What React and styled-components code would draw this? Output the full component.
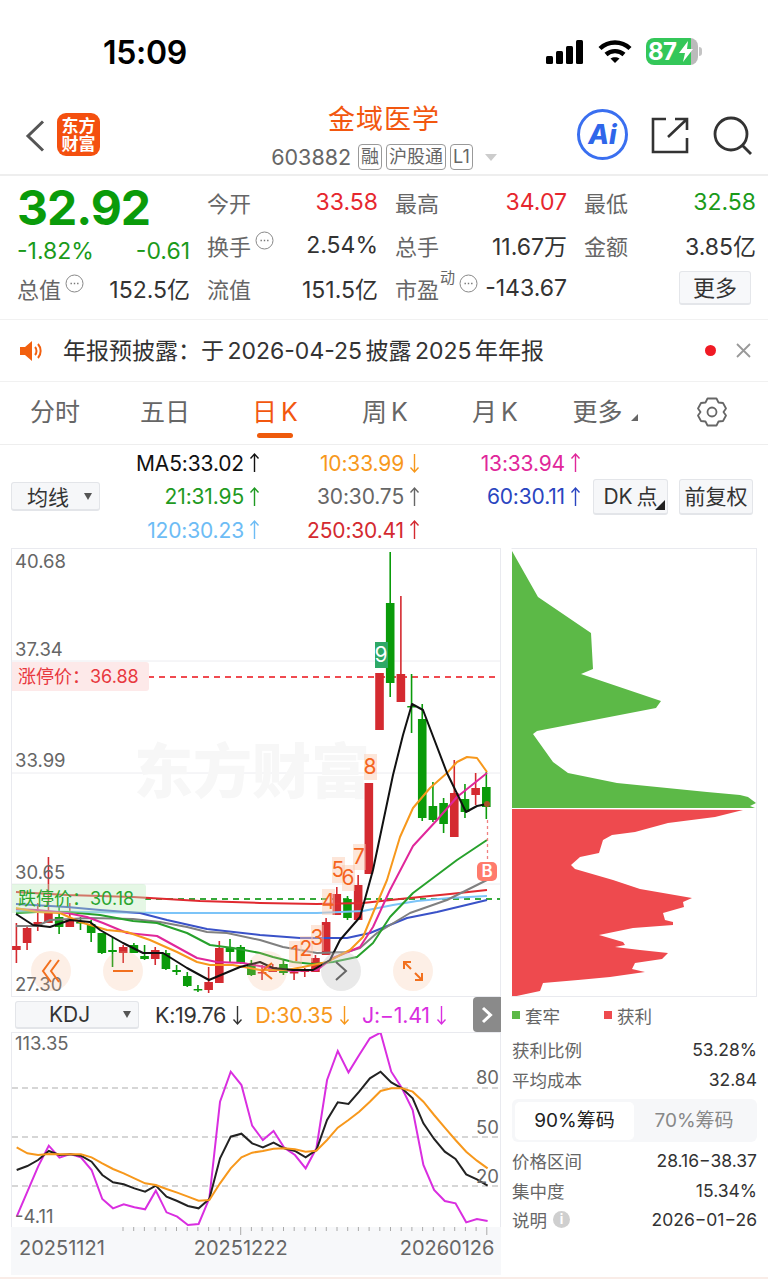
import React from 'react';
import styled, { createGlobalStyle } from 'styled-components';

const RED = '#d42a30';
const GREEN = '#0a9b0a';
const ORANGE = '#f2570f';
const FONT = '"Inter", "Noto Sans CJK SC", sans-serif';

const GlobalStyle = createGlobalStyle`
  html, body { margin: 0; padding: 0; background: #fff; }
  body { font-family: ${FONT}; color: #333; }
`;

const Page = styled.div`
  width: 768px;
  height: 1279px;
  overflow: hidden;
  background: #fff;
  display: flex;
  flex-direction: column;
`;

/* status bar */
const StatusBar = styled.div`
  height: 100px;
  box-sizing: border-box;
  padding: 33px 0 0 103px;
  display: flex;
  align-items: flex-start;
`;
const Clock = styled.div`
  width: 443px;
  font-size: 32px;
  line-height: 40px;
  font-weight: 600;
  color: #000;
  letter-spacing: -0.3px;
`;
const Battery = styled.div`
  position: relative;
  width: 52px;
  height: 27px;
  margin: 5px 0 0 14px;
  border-radius: 8px;
  background: linear-gradient(90deg, #34c759 0 86%, #bbb 86% 100%);
  color: #fff;
  font-size: 24px;
  line-height: 27px;
  font-weight: 700;
  padding-left: 2px;
  box-sizing: border-box;
  letter-spacing: -0.5px;
`;
const BatteryBolt = styled.svg`
  position: absolute;
  right: 5px;
  top: 3px;
`;
const BatteryNub = styled.div`
  position: absolute;
  right: -4px;
  top: 9px;
  width: 3px;
  height: 9px;
  border-radius: 0 3px 3px 0;
  background: #c4c4c4;
`;
const StatusIcon = styled.svg`
  margin: ${(p) => p.$top || 7}px 0 0 ${(p) => p.$left || 0}px;
`;

/* nav */
const Nav = styled.div`
  height: 76px;
  box-sizing: border-box;
  border-bottom: 2px solid #eeeeee;
  display: grid;
  grid-template-columns: 1fr auto 1fr;
`;
const NavLeft = styled.div`
  display: flex;
  align-items: flex-start;
  padding: 13px 0 0 25px;
`;
const BackIcon = styled.svg`
  margin-top: 7px;
`;
const Logo = styled.div`
  width: 43px;
  height: 43px;
  margin-left: 12px;
  border-radius: 9px;
  background: #f4500f;
  color: #fff;
  font-size: 17px;
  line-height: 18px;
  font-weight: 700;
  text-align: center;
  display: flex;
  align-items: center;
  justify-content: center;
`;
const NavCenter = styled.div`
  display: flex;
  flex-direction: column;
  align-items: center;
`;
const Title = styled.div`
  height: 40px;
  line-height: 40px;
  font-size: 27px;
  color: ${ORANGE};
  letter-spacing: 1px;
`;
const SubRow = styled.div`
  margin-top: 5px;
  display: flex;
  align-items: center;
  gap: 4px;
  height: 24px;
`;
const Code = styled.span`
  font-size: 21.5px;
  color: #666;
  margin-right: 3px;
`;
const Tag = styled.span`
  border: 1px solid #999;
  border-radius: 4px;
  font-size: 18px;
  line-height: 24px;
  height: 24px;
  padding: 0 2px;
  color: #666;
`;
const Caret = styled.span`
  width: 0;
  height: 0;
  margin-left: 8px;
  border-left: 6px solid transparent;
  border-right: 6px solid transparent;
  border-top: 7px solid #ccc;
`;
const NavRight = styled.div`
  position: relative;
  display: flex;
  justify-content: flex-end;
  align-items: flex-start;
  padding: 9px 16px 0 0;
`;
const AiBadge = styled.div`
  position: relative;
  width: 51px;
  height: 51px;
  box-sizing: border-box;
  border: 3px solid #3a6ff0;
  border-radius: 50%;
  color: #2f66ea;
  font-size: 27px;
  line-height: 45px;
  font-weight: 800;
  font-style: italic;
  text-align: center;
  margin-right: 23px;
`;
const ShareIcon = styled.svg`
  margin: 8px 24px 0 0;
`;
const SearchIcon = styled.svg`
  margin-top: 7px;
`;

/* quote */
const Quote = styled.div`
  height: 144px;
  box-sizing: border-box;
  border-bottom: 1px solid #f1f1f1;
  padding: 4px 0 0 17px;
  display: grid;
  grid-template-columns: 173px 171px 172px 172px;
  column-gap: 17px;
  grid-auto-rows: 43px;
  font-size: 22px;
`;
const Price = styled.div`
  margin-top: 3px;
  font-size: 48px;
  line-height: 50px;
  font-weight: 700;
  letter-spacing: -1px;
  color: ${GREEN};
`;
const Stat = styled.div`
  display: flex;
  justify-content: space-between;
  align-items: center;
  padding-top: ${(p) => p.$shift || 0}px;
`;
const Label = styled.span`
  display: flex;
  align-items: flex-start;
  color: #666;
`;
const Value = styled.span`
  font-size: 23px;
  color: ${(p) => p.$color || '#333'};
`;
const DotsIcon = styled.svg`
  margin: 2px 0 0 4px;
`;
const Sup = styled.sup`
  font-size: 15px;
  line-height: 16px;
  margin: -2px 0 0 1px;
  vertical-align: baseline;
`;
const MoreButton = styled.div`
  margin: 0 5px 0 auto;
  width: 72px;
  height: 34px;
  line-height: 33px;
  text-align: center;
  box-sizing: border-box;
  border: 1px solid #e4e6ea;
  border-bottom-width: 2px;
  border-radius: 3px;
  background: #f7f8fa;
  color: #333;
  align-self: center;
`;

/* notice */
const Notice = styled.div`
  height: 62px;
  box-sizing: border-box;
  border-bottom: 1px solid #f1f1f1;
  padding: 0 17px 0 20px;
  display: flex;
  align-items: center;
  font-size: 23px;
  color: #333;
`;
const NoticeText = styled.span`
  margin: 0 0 4px 19px;
  flex: 1;
  word-spacing: -3px;
`;
const RedDot = styled.span`
  width: 11px;
  height: 11px;
  border-radius: 50%;
  background: #f01a24;
  margin-right: 20px;
`;

/* tabs */
const Tabs = styled.div`
  height: 63px;
  box-sizing: border-box;
  border-bottom: 1px solid #eeeeee;
  display: grid;
  grid-template-columns: repeat(7, 110px);
`;
const Tab = styled.div`
  position: relative;
  text-align: center;
  line-height: 60px;
  font-size: 25px;
  word-spacing: -3px;
  color: ${(p) => (p.$active ? ORANGE : '#666')};
`;
const TabBar = styled.span`
  position: absolute;
  left: 37px;
  top: 51px;
  width: 36px;
  height: 5px;
  border-radius: 3px;
  background: #ee5a0c;
`;
const TabCorner = styled.span`
  display: inline-block;
  width: 0;
  height: 0;
  margin-left: 8px;
  border-left: 7px solid transparent;
  border-bottom: 7px solid #666;
`;
const GearWrap = styled.div`
  display: flex;
  align-items: center;
  justify-content: center;
  padding-right: 6px;
  padding-bottom: 2px;
`;

/* moving average block */
const MaSection = styled.div`
  height: 103px;
  box-sizing: border-box;
  padding-left: 11px;
  display: flex;
  align-items: center;
`;
const SelectBox = styled.div`
  box-sizing: border-box;
  width: ${(p) => p.$width}px;
  height: ${(p) => p.$height}px;
  background: #f6f7f9;
  border: 1px solid #e3e5e9;
  border-bottom-width: 2px;
  border-radius: 3px;
  display: flex;
  align-items: center;
  justify-content: space-between;
  padding: 0 7px 0 ${(p) => p.$pad}px;
  font-size: 21px;
  color: #333;
`;
const SelectCaret = styled.span`
  width: 0;
  height: 0;
  border-left: 4.5px solid transparent;
  border-right: 4.5px solid transparent;
  border-top: 7px solid #555;
`;
const MaGrid = styled.div`
  width: 481px;
  display: grid;
  grid-template-columns: 160px 160px 161px;
  grid-auto-rows: 33.5px;
`;
const MaItem = styled.div`
  display: flex;
  justify-content: flex-end;
  align-items: center;
  gap: 5px;
  font-size: 21px;
  letter-spacing: -0.15px;
  color: ${(p) => p.$color};
`;
const ToolButton = styled.div`
  position: relative;
  box-sizing: border-box;
  width: ${(p) => p.$width}px;
  height: 36px;
  margin-left: ${(p) => p.$gap}px;
  background: #f6f7f9;
  border: 1px solid #e3e5e9;
  border-bottom-width: 2px;
  border-radius: 3px;
  font-size: 21px;
  line-height: 33px;
  text-align: center;
  word-spacing: -2px;
  color: #333;
`;
const ToolCorner = styled.span`
  position: absolute;
  right: 2px;
  bottom: 3px;
  width: 0;
  height: 0;
  border-left: 10px solid transparent;
  border-bottom: 10px solid #222;
`;

/* charts */
const ChartGrid = styled.div`
  height: 729px;
  padding-left: 11px;
  display: grid;
  grid-template-columns: 490px 246px;
  column-gap: 10px;
`;
const LeftColumn = styled.div`
  display: flex;
  flex-direction: column;
`;
const RightColumn = styled.div`
  display: flex;
  flex-direction: column;
`;
const KBox = styled.div`
  position: relative;
  width: 490px;
  height: 449px;
  box-sizing: border-box;
  border: 1px solid #e9eaef;
  overflow: hidden;
`;
const Canvas = styled.svg`
  display: block;
`;
const PriceTick = styled.span`
  position: absolute;
  left: 3px;
  top: ${(p) => p.$y - 549 - 12}px;
  font-size: 18.5px;
  line-height: 24px;
  color: #666;
`;
const LimitTag = styled.div`
  position: absolute;
  left: 0;
  top: ${(p) => p.$y - 549}px;
  width: ${(p) => p.$width}px;
  height: 29px;
  line-height: 29px;
  padding-left: 6px;
  box-sizing: border-box;
  border-radius: 0 3px 3px 0;
  font-size: 18px;
  white-space: nowrap;
  color: ${(p) => p.$color};
  background: ${(p) => p.$bg};
`;
const Watermark = styled.div`
  position: absolute;
  left: 122px;
  top: 184px;
  font-size: 59px;
  line-height: 70px;
  font-family: "Noto Sans CJK SC", serif;
  font-weight: 900;
  color: #f7f7f7;
  white-space: nowrap;
`;
const NineMark = styled.span`
  position: absolute;
  left: ${(p) => p.$x - 12 - 6.5}px;
  top: ${(p) => p.$y - 549 - 13}px;
  width: 13px;
  height: 26px;
  line-height: 26px;
  text-align: center;
  font-size: 21px;
  color: ${(p) => (p.$nine ? '#fff' : '#f5641e')};
  background: ${(p) => (p.$nine ? '#2ea866' : 'rgba(250, 200, 170, 0.45)')};
`;
const RoundButton = styled.div`
  position: absolute;
  left: ${(p) => p.$x - 12 - 20}px;
  top: ${(p) => 971 - 549 - 20}px;
  width: 40px;
  height: 40px;
  border-radius: 50%;
  background: ${(p) => (p.$gray ? 'rgba(200, 200, 200, 0.4)' : 'rgba(246, 180, 140, 0.22)')};
  display: flex;
  align-items: center;
  justify-content: center;
`;
const BuyBadge = styled.div`
  position: absolute;
  left: ${487 - 12 - 10}px;
  top: ${871 - 549 - 9}px;
  width: 20px;
  height: 19px;
  border-radius: 5px;
  background: #ff7b6c;
  color: #fff;
  font-size: 17px;
  line-height: 19px;
  font-weight: 600;
  text-align: center;
`;

const KdjHeader = styled.div`
  position: relative;
  height: 35px;
  padding-left: 4px;
  display: flex;
  align-items: center;
  font-size: 21.5px;
`;
const KdjValue = styled.div`
  display: flex;
  align-items: center;
  gap: 6px;
  margin-left: ${(p) => p.$gap}px;
  color: ${(p) => p.$color};
  letter-spacing: -0.3px;
`;
const SideButton = styled.div`
  position: absolute;
  right: 0;
  top: 0;
  width: 28px;
  height: 35px;
  border-radius: 4px 0 0 4px;
  background: #8a8a8a;
  display: flex;
  align-items: center;
  justify-content: center;
`;
const KdjBox = styled.div`
  position: relative;
  width: 490px;
  height: 195px;
  box-sizing: border-box;
  border-left: 1px solid #e9eaef;
  border-right: 1px solid #e9eaef;
  border-top: 1px solid #e9eaef;
`;
const KdjTick = styled.span`
  position: absolute;
  left: ${(p) => (p.$right ? 'auto' : '3px')};
  right: ${(p) => (p.$right ? '1px' : 'auto')};
  top: ${(p) => p.$y - 1033 - 12}px;
  font-size: 18.5px;
  line-height: 24px;
  color: #666;
`;
const DateBar = styled.div`
  width: 490px;
  height: 48px;
  position: relative;
  background: #f7f8fa;
  display: flex;
  box-sizing: border-box;
  padding: 8px 0 0 8px;
  font-size: 20px;
  line-height: 26px;
  color: #666;
`;
const DateLabel = styled.span`
  margin-left: ${(p) => p.$gap || 0}px;
`;
const TickMarks = styled.svg`
  position: absolute;
  left: 0;
  top: 0;
`;
const PageFoot = styled.div`
  height: 2px;
  background: #f9ece7;
`;

const ChipBox = styled.div`
  width: 246px;
  height: 449px;
  box-sizing: border-box;
  border: 1px solid #e9eaef;
  border-left-color: #fff;
`;
const Legend = styled.div`
  height: 38px;
  box-sizing: border-box;
  padding: 0 0 2px 1px;
  display: flex;
  align-items: center;
  font-size: 17.5px;
  color: #666;
`;
const LegendItem = styled.div`
  display: flex;
  align-items: center;
  width: 92px;
`;
const LegendSwatch = styled.span`
  width: 8px;
  height: 8px;
  margin-right: 5px;
  background: ${(p) => p.$color};
`;
const InfoRow = styled.div`
  height: 29.5px;
  display: flex;
  align-items: center;
  justify-content: space-between;
  font-size: 17.5px;
  padding-left: 1px;
`;
const InfoLabel = styled.span`
  display: flex;
  align-items: center;
  gap: 6px;
  color: #666;
`;
const InfoValue = styled.span`
  color: #333;
`;
const InfoMark = styled.span`
  width: 17px;
  height: 17px;
  border-radius: 50%;
  background: #cfcfcf;
  color: #fff;
  font-size: 13px;
  line-height: 17px;
  font-weight: 700;
  text-align: center;
`;
const Segment = styled.div`
  margin: 5px 0 4px 1px;
  height: 43px;
  box-sizing: border-box;
  padding: 3px;
  border-radius: 6px;
  background: #f6f7f9;
  display: grid;
  grid-template-columns: 119px 1fr;
`;
const SegmentItem = styled.div`
  border-radius: 5px;
  text-align: center;
  line-height: 38px;
  font-size: 19px;
  color: ${(p) => (p.$active ? '#222' : '#888')};
  background: ${(p) => (p.$active ? '#fff' : 'transparent')};
`;

/* drawings */
const Arrow = ({ down }) => (
  <svg width="11" height="22" viewBox="0 0 11 22" fill="none" stroke="currentColor" strokeWidth="1.4">
    {down ? (
      <path d="M5.5 2V20M1.5 15.5L5.5 20L9.5 15.5" />
    ) : (
      <path d="M5.5 2V20M1.5 6.5L5.5 2L9.5 6.5" />
    )}
  </svg>
);

const Dots = () => (
  <DotsIcon width="19" height="19" viewBox="0 0 19 19" fill="none">
    <circle cx="9.5" cy="9.5" r="8.5" stroke="#888" strokeWidth="1" />
    <path d="M5.5 9.5h1.4M8.8 9.5h1.4M12.1 9.5h1.4" stroke="#777" strokeWidth="1.5" />
  </DotsIcon>
);

// candles: color, wick top, wick bottom, body top, body bottom (page coords)
const candleRows = [
  ['r', 923, 963, 946, 950], ['r', 927, 950, 928, 943], ['r', 903, 931, 922, 926], ['r', 857, 923, 913, 923],
  ['g', 907, 934, 917, 927], ['r', 903, 927, 920, 927], ['g', 917, 930, 922, 923], ['g', 920, 942, 924, 933],
  ['g', 933, 954, 933, 953], ['g', 937, 967, 950, 952], ['r', 945, 963, 947, 953], ['g', 943, 953, 945, 953],
  ['g', 945, 960, 956, 959], ['r', 947, 965, 950, 959], ['g', 950, 970, 953, 969], ['g', 965, 975, 970, 972],
  ['g', 972, 987, 976, 986], ['g', 985, 992, 989, 990], ['r', 967, 993, 982, 990], ['r', 941, 983, 948, 983],
  ['g', 939, 962, 948, 952], ['g', 945, 964, 947, 963], ['g', 960, 976, 963, 975], ['r', 965, 980, 972, 973],
  ['r', 964, 972, 967, 972], ['g', 960, 975, 964, 973], ['r', 971, 980, 972, 973], ['r', 968, 977, 970, 972],
  ['r', 955, 972, 958, 972], ['r', 918, 955, 922, 955], ['r', 887, 915, 894, 915], ['g', 896, 920, 899, 918],
  ['r', 875, 920, 885, 920], ['r', 783, 874, 783, 874], ['r', 673, 730, 673, 730], ['g', 552, 697, 603, 683],
  ['r', 596, 702, 674, 702], ['g', 674, 733, 706, 707.5], ['g', 704, 821, 719, 818], ['g', 782, 822, 806, 820],
  ['g', 798, 833, 803, 824], ['r', 760, 837, 793, 837], ['g', 784, 818, 799, 812], ['r', 773, 805, 788, 795],
  ['g', 772, 819, 787, 807],
];

const maLines = [
  ['#e02a30', '16,892 67,895 133,897 200,901 260,903 317,904 363,903 400,899 450,894 487,890'],
  ['#7cc4f8', '16,911 83,912 167,913 260,913 317,913 363,911 393,905 417,901 450,898 487,896'],
  ['#3a52c8', '16,904 67,907 100,910 140,913 167,920 207,929 260,935 300,938 347,938 370,933 407,918 437,912 487,900'],
  ['#808080', '16,926 37,926 50,920 90,918 133,919 160,922 187,927 207,932 227,933 260,940 283,947 317,953 347,952 360,948 377,933 410,913 447,900 487,880'],
  ['#27a12c', '16,913 37,912 67,912 100,915 133,921 157,923 187,933 210,945 233,948 260,953 273,957 293,962 313,964 333,962 357,957 373,943 390,917 413,893 437,875 457,860 487,840'],
  ['#e0279a', '16,909 37,910 67,913 87,917 103,923 127,933 157,936 177,947 197,958 217,962 243,963 270,968 292,971 317,970 333,958 360,947 373,927 390,890 413,846 437,820 457,797 487,773'],
  ['#f7981c', '16,908 37,912 60,913 80,922 107,930 127,932 150,940 177,952 197,962 210,965 233,965 260,970 287,970 303,967 327,962 350,950 363,937 373,913 387,880 400,837 413,808 430,788 447,773 457,762 467,757 477,758 487,772'],
  ['#111111', '16,914 33,925 50,927 70,920 90,922 100,930 123,943 143,953 163,953 187,968 209,980 240,967 260,962 273,968 293,970 313,970 330,960 340,940 360,917 373,870 393,775 403,735 412,704 423,710 447,773 466,812 477,806 487,804'],
];

const kY = [525,513,495,468,480,478,482,500,540,562,568,580,590,572,605,618,633,640,612,490,425,416,445,457,443,460,468,487,465,375,322,327,290,250,230,262,280,310,385,432,470,492,538,553,572];
const dY = [457,475,480,477,478,478,478,487,505,522,535,550,565,570,582,593,605,617,615,565,520,487,473,468,461,460,463,470,467,435,398,375,350,320,288,280,280,290,320,360,398,435,470,497,520];
const jY = [665,590,515,452,488,477,487,525,612,640,628,637,643,587,652,665,690,687,610,320,230,270,392,435,408,458,480,520,460,255,168,232,180,130,113,230,280,345,510,585,618,625,682,672,678];
const kdjPoints = (ys) => ys.map((y, i) => `${(50 + 32.11 * i) / 3},${995 + y / 3}`).join(' ');

const greenChips = '512,551 538,597 591,633 593,669 581,674 661,701 656,708 537,731 533,734 553,762 568,773 617,783 707,792 740,795 748,797 756,803 750,806 755,808 512,808';
const redChips = '512,809 743,810 715,817 668,823 635,832 612,835 603,840 599,853 580,857 571,865 575,869 613,880 640,889 692,898 683,902 684,907 663,913 665,920 673,922 673,925 633,928 599,935 623,942 625,945 615,947 640,950 668,953 662,959 635,963 632,969 645,972 610,977 578,980 543,983 540,991 512,997';

const Candle = ({ row, i }) => {
  const [c, top, bottom, bodyTop, bodyBottom] = row;
  const x = 16.4 + 10.68 * i;
  const fill = c === 'r' ? RED : GREEN;
  const h = bodyBottom - bodyTop;
  return (
    <g>
      <line x1={x} x2={x} y1={top} y2={bottom} stroke={fill} strokeWidth="1.6" />
      <rect x={x - 4.3} y={bodyTop} width="8.6" height={Math.max(h, 1.5)} fill={fill} />
    </g>
  );
};

const CandleChart = () => (
  <Canvas width="488" height="447" viewBox="12 549 488 447">
    {[661, 773, 884].map((y) => (
      <line key={y} x1="12" x2="500" y1={y} y2={y} stroke="#ececf0" strokeWidth="1" />
    ))}
    <line x1="148" x2="500" y1="677" y2="677" stroke="#f04a50" strokeWidth="2" strokeDasharray="6 5" />
    <line x1="145" x2="500" y1="899" y2="899" stroke="#35a93a" strokeWidth="2" strokeDasharray="6 5" />
    {candleRows.map((row, i) => <Candle key={i} row={row} i={i} />)}
    {maLines.map(([color, pts]) => (
      <polyline key={color} points={pts} fill="none" stroke={color} strokeWidth="2" strokeLinejoin="round" />
    ))}
    <line x1="487.5" x2="487.5" y1="820" y2="862" stroke="#f08080" strokeWidth="1.3" strokeDasharray="3 3" />
    <circle cx="487" cy="804" r="3" fill="#a9552a" />
  </Canvas>
);

const KdjChart = () => (
  <Canvas width="488" height="194" viewBox="12 1033 488 194">
    {[1088, 1137, 1186].map((y) => (
      <line key={y} x1="12" x2="500" y1={y} y2={y} stroke="#c9c9c9" strokeWidth="1.3" strokeDasharray="6 4" />
    ))}
    <polyline points={kdjPoints(jY)} fill="none" stroke="#d92ee0" strokeWidth="2" />
    <polyline points={kdjPoints(kY)} fill="none" stroke="#222" strokeWidth="2" />
    <polyline points={kdjPoints(dY)} fill="none" stroke="#f7981c" strokeWidth="2" />
  </Canvas>
);

const ChipChart = () => (
  <Canvas width="244" height="447" viewBox="512 549 244 447">
    <polygon points={greenChips} fill="#5cb947" />
    <polygon points={redChips} fill="#ee4a4e" />
  </Canvas>
);

const ticks = Array.from({ length: 35 }, (_, i) => 123 + 10.7 * i);

const maItems = [
  ['MA5:33.02', '#111', false], ['10:33.99', '#f7981c', true], ['13:33.94', '#e0279a', false],
  ['21:31.95', '#1f9a22', false], ['30:30.75', '#666', false], ['60:30.11', '#2a45c0', false],
  ['120:30.23', '#6dbcf5', false], ['250:30.41', '#d42a30', false],
];

const tdMarks = [
  ['1', 295, 954], ['2', 306, 949], ['3', 317, 938], ['4', 328, 902], ['5', 338, 870],
  ['6', 348, 878], ['7', 359, 857], ['8', 370, 767],
];

const orangeStroke = { fill: 'none', stroke: '#f2701e', strokeWidth: 2 };

const App = () => (
  <Page>
    <GlobalStyle />
    <StatusBar>
      <Clock>15:09</Clock>
      <StatusIcon width="38" height="24" viewBox="0 0 38 24" fill="#000">
        <rect x="0" y="16" width="7" height="8" rx="1.5" />
        <rect x="10" y="11" width="7" height="13" rx="1.5" />
        <rect x="20" y="6" width="7" height="18" rx="1.5" />
        <rect x="30" y="0" width="7" height="24" rx="1.5" />
      </StatusIcon>
      <StatusIcon $left={14} width="34" height="24" viewBox="0 0 34 24" fill="none" stroke="#000" strokeWidth="4.4">
        <path d="M2 8.5C10.5 0.5 23.5 0.5 32 8.5" />
        <path d="M8 14.5C13 10 21 10 26 14.5" />
        <path d="M17 23L12.5 18.6C15 16.8 19 16.8 21.5 18.6Z" fill="#000" stroke="none" />
      </StatusIcon>
      <Battery>
        87
        <BatteryBolt width="14" height="21" viewBox="0 0 14 21" fill="#fff">
          <path d="M9 0L0 12H6L4 21L14 8H8Z" />
        </BatteryBolt>
        <BatteryNub />
      </Battery>
    </StatusBar>

    <Nav>
      <NavLeft>
        <BackIcon width="20" height="32" viewBox="0 0 20 32" fill="none" stroke="#555" strokeWidth="3">
          <path d="M18 1.5L3 16L18 30.5" />
        </BackIcon>
        <Logo>东方<br />财富</Logo>
      </NavLeft>
      <NavCenter>
        <Title>金域医学</Title>
        <SubRow>
          <Code>603882</Code>
          <Tag>融</Tag>
          <Tag>沪股通</Tag>
          <Tag>L1</Tag>
          <Caret />
        </SubRow>
      </NavCenter>
      <NavRight>
        <AiBadge>Ai</AiBadge>
        <ShareIcon width="38" height="37" viewBox="0 0 38 37" fill="none" stroke="#333" strokeWidth="2.6">
          <path d="M15 2H2V35H36V21" />
          <path d="M17 20L36 2M24 2H36V13" />
        </ShareIcon>
        <SearchIcon width="39" height="39" viewBox="0 0 39 39" fill="none" stroke="#333" strokeWidth="2.8">
          <circle cx="18" cy="18" r="16" />
          <path d="M29 29L38 38" />
        </SearchIcon>
      </NavRight>
    </Nav>

    <Quote>
      <Price>32.92</Price>
      <Stat><Label>今开</Label><Value $color="#e6272e">33.58</Value></Stat>
      <Stat><Label>最高</Label><Value $color="#e6272e">34.07</Value></Stat>
      <Stat><Label>最低</Label><Value $color="#1a9a1a">32.58</Value></Stat>

      <Stat $shift={13}><Value $color="#1a9a1a">-1.82%</Value><Value $color="#1a9a1a">-0.61</Value></Stat>
      <Stat><Label>换手<Dots /></Label><Value>2.54%</Value></Stat>
      <Stat><Label>总手</Label><Value>11.67万</Value></Stat>
      <Stat><Label>金额</Label><Value>3.85亿</Value></Stat>

      <Stat><Label>总值<Dots /></Label><Value>152.5亿</Value></Stat>
      <Stat><Label>流值</Label><Value>151.5亿</Value></Stat>
      <Stat><Label>市盈<Sup>动</Sup><Dots /></Label><Value>-143.67</Value></Stat>
      <Stat><MoreButton>更多</MoreButton></Stat>
    </Quote>

    <Notice>
      <svg width="24" height="22" viewBox="0 0 24 22" fill="#f2600f">
        <path d="M0 7H5L12 1V21L5 15H0Z" />
        <path d="M15 7C17 9 17 13 15 15M18 4C21.500 8 21.500 14 18 18" fill="none" stroke="#f2600f" strokeWidth="2" />
      </svg>
      <NoticeText>年报预披露：于 2026-04-25 披露 2025 年年报</NoticeText>
      <RedDot />
      <svg width="15" height="15" viewBox="0 0 15 15" fill="none" stroke="#999" strokeWidth="1.8">
        <path d="M1 1L14 14M14 1L1 14" />
      </svg>
    </Notice>

    <Tabs>
      <Tab>分时</Tab>
      <Tab>五日</Tab>
      <Tab $active>日 K<TabBar /></Tab>
      <Tab>周 K</Tab>
      <Tab>月 K</Tab>
      <Tab>更多<TabCorner /></Tab>
      <GearWrap>
        <svg width="30" height="32" viewBox="0 0 30 32" fill="none" stroke="#666" strokeWidth="1.8">
          <path d="M10.500 2.500H19.500L21.500 6.500L26 7L29 12.500L26.500 16L29 19.500L26 25L21.500 25.500L19.500 29.500H10.500L8.500 25.500L4 25L1 19.500L3.500 16L1 12.500L4 7L8.500 6.500Z" strokeLinejoin="round" />
          <circle cx="15" cy="16" r="4.5" />
        </svg>
      </GearWrap>
    </Tabs>

    <MaSection>
      <SelectBox $width={89} $height={29} $pad={15}>均线<SelectCaret /></SelectBox>
      <MaGrid>
        {maItems.map(([text, color, down]) => (
          <MaItem key={text} $color={color}>{text}<Arrow down={down} /></MaItem>
        ))}
      </MaGrid>
      <ToolButton $width={75} $gap={12}>DK 点<ToolCorner /></ToolButton>
      <ToolButton $width={74} $gap={11}>前复权</ToolButton>
    </MaSection>

    <ChartGrid>
      <LeftColumn>
        <KBox>
          <Watermark>东方财富</Watermark>
          <CandleChart />
          <PriceTick $y={561}>40.68</PriceTick>
          <PriceTick $y={649}>37.34</PriceTick>
          <PriceTick $y={760}>33.99</PriceTick>
          <PriceTick $y={872}>30.65</PriceTick>
          <PriceTick $y={984}>27.30</PriceTick>
          <LimitTag $y={662} $width={137} $color="#e8383e" $bg="#fde9e9">涨停价：36.88</LimitTag>
          <LimitTag $y={884} $width={134} $color="#2aa52f" $bg="rgba(190, 235, 190, 0.4)">跌停价：30.18</LimitTag>
          {tdMarks.map(([t, x, y]) => <NineMark key={t} $x={x} $y={y}>{t}</NineMark>)}
          <NineMark $x={381} $y={655} $nine>9</NineMark>
          <BuyBadge>B</BuyBadge>
          <RoundButton $x={51}>
            <svg width="20" height="26" viewBox="0 0 20 26" {...orangeStroke}>
              <path d="M10 2L2 13L10 24M18 2L10 13L18 24" />
            </svg>
          </RoundButton>
          <RoundButton $x={123}>
            <svg width="20" height="4" viewBox="0 0 20 4" {...orangeStroke}><path d="M0 2H20" /></svg>
          </RoundButton>
          <RoundButton $x={267}>
            <svg width="14" height="20" viewBox="0 0 14 20" {...orangeStroke}><path d="M12 2L2 10L12 18" /></svg>
          </RoundButton>
          <RoundButton $x={341} $gray>
            <svg width="14" height="22" viewBox="0 0 14 22" fill="none" stroke="#666" strokeWidth="2"><path d="M2 2L12 11L2 20" /></svg>
          </RoundButton>
          <RoundButton $x={413}>
            <svg width="22" height="22" viewBox="0 0 22 22" {...orangeStroke}>
              <path d="M2 9V2H9M2 2L9 9M20 13V20H13M20 20L13 13" />
            </svg>
          </RoundButton>
        </KBox>

        <KdjHeader>
          <SelectBox $width={124} $height={28} $pad={33}>KDJ<SelectCaret /></SelectBox>
          <KdjValue $gap={16} $color="#333">K:19.76<Arrow down /></KdjValue>
          <KdjValue $gap={12} $color="#f7981c">D:30.35<Arrow down /></KdjValue>
          <KdjValue $gap={12} $color="#d92ee0">J:−1.41<Arrow down /></KdjValue>
          <SideButton>
            <svg width="12" height="18" viewBox="0 0 12 18" fill="none" stroke="#fff" strokeWidth="3"><path d="M2 2L9.500 9L2 16" /></svg>
          </SideButton>
        </KdjHeader>

        <KdjBox>
          <KdjChart />
          <KdjTick $y={1043}>113.35</KdjTick>
          <KdjTick $y={1216}>-4.11</KdjTick>
          <KdjTick $y={1077} $right>80</KdjTick>
          <KdjTick $y={1127} $right>50</KdjTick>
          <KdjTick $y={1176} $right>20</KdjTick>
        </KdjBox>
        <DateBar>
          <TickMarks width="490" height="8" viewBox="11 1227 490 8">
            {ticks.map((x, i) => (
              <line key={i} x1={x} x2={x} y1="1227" y2={i === 11 || i === 34 ? '1235' : '1231'} stroke="#aaa" strokeWidth="1" />
            ))}
          </TickMarks>
          <DateLabel>20251121</DateLabel>
          <DateLabel $gap={89}>20251222</DateLabel>
          <DateLabel $gap={112}>20260126</DateLabel>
        </DateBar>
      </LeftColumn>

      <RightColumn>
        <ChipBox><ChipChart /></ChipBox>
        <Legend>
          <LegendItem><LegendSwatch $color="#5cb947" />套牢</LegendItem>
          <LegendItem><LegendSwatch $color="#ee4a4e" />获利</LegendItem>
        </Legend>
        <InfoRow><InfoLabel>获利比例</InfoLabel><InfoValue>53.28%</InfoValue></InfoRow>
        <InfoRow><InfoLabel>平均成本</InfoLabel><InfoValue>32.84</InfoValue></InfoRow>
        <Segment>
          <SegmentItem $active>90%筹码</SegmentItem>
          <SegmentItem>70%筹码</SegmentItem>
        </Segment>
        <InfoRow><InfoLabel>价格区间</InfoLabel><InfoValue>28.16−38.37</InfoValue></InfoRow>
        <InfoRow><InfoLabel>集中度</InfoLabel><InfoValue>15.34%</InfoValue></InfoRow>
        <InfoRow><InfoLabel>说明<InfoMark>i</InfoMark></InfoLabel><InfoValue>2026−01−26</InfoValue></InfoRow>
      </RightColumn>
    </ChartGrid>
    <PageFoot />
  </Page>
);

export default App;
